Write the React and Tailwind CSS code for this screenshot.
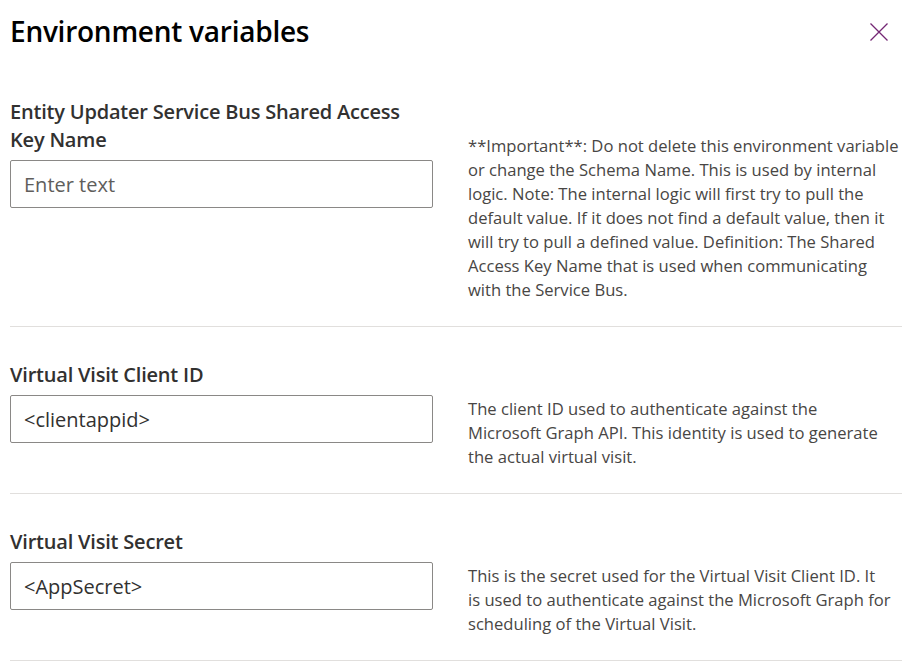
import React from 'react';

const vars = [
  {
    label: 'Entity Updater Service Bus Shared Access Key Name',
    value: '',
    placeholder: 'Enter text',
    desc: [
      '**Important**: Do not delete this environment variable',
      'or change the Schema Name. This is used by internal',
      'logic. Note: The internal logic will first try to pull the',
      'default value. If it does not find a default value, then it',
      'will try to pull a defined value. Definition: The Shared',
      'Access Key Name that is used when communicating',
      'with the Service Bus.',
    ],
  },
  {
    label: 'Virtual Visit Client ID',
    value: '<clientappid>',
    desc: [
      'The client ID used to authenticate against the',
      'Microsoft Graph API. This identity is used to generate',
      'the actual virtual visit.',
    ],
  },
  {
    label: 'Virtual Visit Secret',
    value: '<AppSecret>',
    desc: [
      'This is the secret used for the Virtual Visit Client ID. It',
      'is used to authenticate against the Microsoft Graph for',
      'scheduling of the Virtual Visit.',
    ],
  },
];

const CloseIcon = () => (
  <svg width="20" height="20" viewBox="0 0 20 20" fill="none">
    <path d="M1.5 1.5 L18.5 18.5 M18.5 1.5 L1.5 18.5" stroke="#742774" strokeWidth="1.3" />
  </svg>
);

export default function App() {
  return (
    <div className="w-[913px] h-[668px] bg-white overflow-hidden font-['Open_Sans',sans-serif] text-[#323130]">
      <div className="flex items-center justify-between pl-[10px] pr-[24px] pt-[12px] h-[50px]">
        <h1 className="text-[28px] font-semibold text-black leading-[36px] tracking-[-0.25px]">Environment variables</h1>
        <button className="mt-[2px]"><CloseIcon /></button>
      </div>

      <div className="pl-[10px] pr-[11px] pt-[48px]">
        {vars.map((v, i) => (
          <div key={i}>
            {i > 0 && <div className="h-[34px]" />}
            <div className="flex gap-[36px] pb-[24px] border-b border-[#e1dfdd]">
              <div className="w-[422px] shrink-0">
                <label className="block text-[20px] font-semibold leading-[28px] text-[#323130] tracking-[-0.2px] pr-[10px]">
                  {v.label}
                </label>
                <input
                  readOnly
                  defaultValue={v.value}
                  placeholder={v.placeholder}
                  className="mt-[6px] w-[423px] h-[48px] border border-[#8a8886] rounded-[2px] px-[13px] text-[20px] text-[#323130] placeholder:text-[#605e5c] outline-none"
                />
              </div>
              <p className="pt-[36px] flex-1 text-[16.6px] leading-[24px] text-[#484644]">
                {v.desc.map((line, j) => (
                  <span key={j} className="block whitespace-nowrap">{line}</span>
                ))}
              </p>
            </div>
          </div>
        ))}
      </div>
    </div>
  );
}
